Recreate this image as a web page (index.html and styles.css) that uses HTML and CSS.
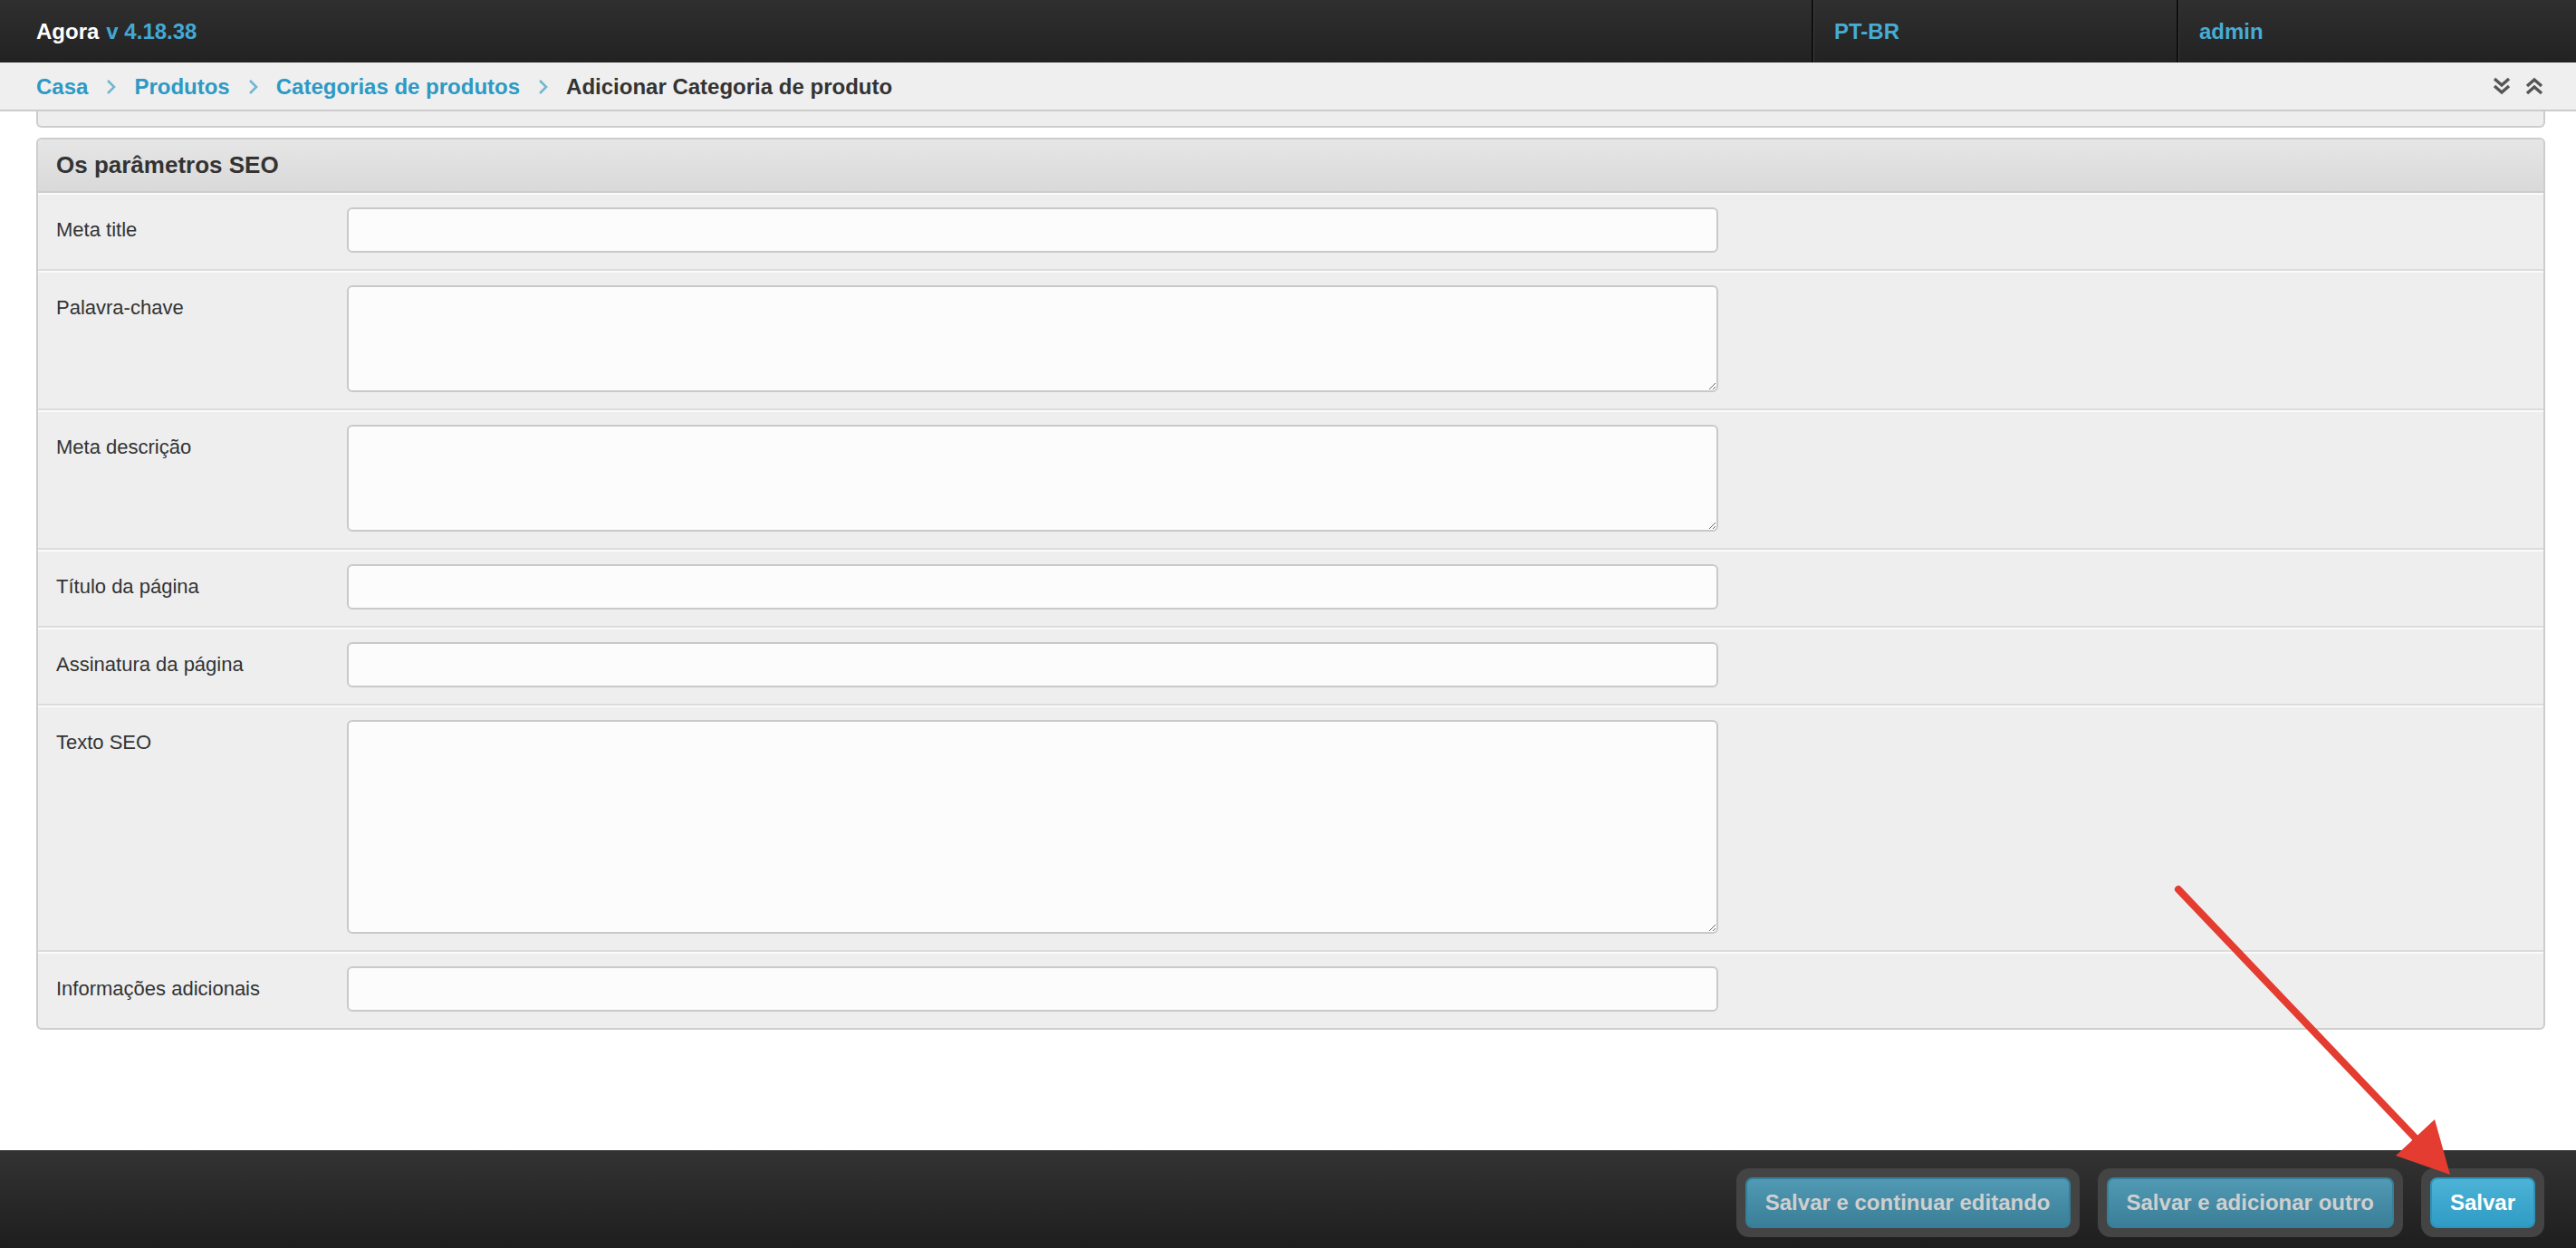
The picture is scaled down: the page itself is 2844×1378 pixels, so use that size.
FILE: index.html
```html
<!DOCTYPE html>
<html lang="pt-BR">
<head>
    <meta charset="utf-8">
    <title>Adicionar Categoria de produto | Agora</title>
    <link rel="stylesheet" href="styles.css">
</head>
<body>
    <div id="header">
        <div class="branding">Agora <span class="version">v 4.18.38</span></div>
        <div class="user-tools">
            <div class="tool-cell lang">PT-BR</div>
            <div class="tool-cell user">admin</div>
        </div>
    </div>

    <div class="breadcrumbs">
        <div class="crumbs">
            <a href="#">Casa</a>
            <svg class="sep" viewBox="0 0 11 18"><path d="M2 2 L9 9 L2 16" /></svg>
            <a href="#">Produtos</a>
            <svg class="sep" viewBox="0 0 11 18"><path d="M2 2 L9 9 L2 16" /></svg>
            <a href="#">Categorias de produtos</a>
            <svg class="sep" viewBox="0 0 11 18"><path d="M2 2 L9 9 L2 16" /></svg>
            <span class="current">Adicionar Categoria de produto</span>
        </div>
        <div class="toggles">
            <svg class="toggle" viewBox="0 0 22 22"><path d="M3 3 L11 10 L19 3 M3 11 L11 18 L19 11" /></svg>
            <svg class="toggle" viewBox="0 0 22 22"><path d="M3 11 L11 4 L19 11 M3 19 L11 12 L19 19" /></svg>
        </div>
    </div>

    <div id="content">
        <div class="module collapsed"></div>

        <fieldset class="module">
            <h2>Os parâmetros SEO</h2>
            <div class="form-row">
                <label>Meta title</label>
                <input type="text">
            </div>
            <div class="form-row">
                <label>Palavra-chave</label>
                <textarea></textarea>
            </div>
            <div class="form-row">
                <label>Meta descrição</label>
                <textarea></textarea>
            </div>
            <div class="form-row">
                <label>Título da página</label>
                <input type="text">
            </div>
            <div class="form-row">
                <label>Assinatura da página</label>
                <input type="text">
            </div>
            <div class="form-row">
                <label>Texto SEO</label>
                <textarea class="tall"></textarea>
            </div>
            <div class="form-row">
                <label>Informações adicionais</label>
                <input type="text">
            </div>
        </fieldset>
    </div>

    <div class="submit-row">
        <div class="btn-wrap"><button class="btn">Salvar e continuar editando</button></div>
        <div class="btn-wrap"><button class="btn">Salvar e adicionar outro</button></div>
        <div class="btn-wrap"><button class="btn default">Salvar</button></div>
    </div>

    <svg class="annotation" viewBox="0 0 2844 1378">
        <line x1="2405" y1="982" x2="2668" y2="1258" />
        <polygon points="2705,1297 2645,1276 2688,1236" />
    </svg>
</body>
</html>
```

FILE: styles.css
```css
html,
body {
    margin: 0;
    height: 100%;
}

body {
    display: flex;
    flex-direction: column;
    font-family: "Liberation Sans", Arial, sans-serif;
    color: #333;
    background: #fff;
    overflow: hidden;
}

/* top bar */

#header {
    display: flex;
    align-items: stretch;
    justify-content: space-between;
    height: 69px;
    flex-shrink: 0;
    background: linear-gradient(#2f2f2f, #222);
}

.branding {
    display: flex;
    align-items: center;
    padding-left: 40px;
    font-size: 24px;
    font-weight: bold;
    color: #fff;
}

.version {
    margin-left: 8px;
    color: #43a9d3;
}

.user-tools {
    display: flex;
}

.tool-cell {
    display: flex;
    align-items: center;
    padding-left: 23px;
    border-left: 2px solid #0e0e0e;
    box-shadow: inset 1px 0 0 #3a3a3a;
    font-size: 24px;
    font-weight: bold;
    color: #47acd5;
}

.tool-cell.lang {
    width: 378px;
}

.tool-cell.user {
    width: 416px;
}

/* breadcrumbs */

.breadcrumbs {
    display: flex;
    align-items: center;
    justify-content: space-between;
    height: 52px;
    flex-shrink: 0;
    padding: 0 35px 0 40px;
    background: #efefef;
    border-bottom: 2px solid #cbcbcb;
}

.crumbs {
    display: flex;
    align-items: center;
    padding-top: 2px;
    font-size: 24px;
    font-weight: bold;
}

.crumbs a {
    color: #2d99c4;
    text-decoration: none;
}

.crumbs .current {
    color: #333;
}

.sep {
    width: 11px;
    height: 18px;
    margin: 0 20px;
    fill: none;
    stroke: #73b6d2;
    stroke-width: 2.6;
}

.toggles {
    display: flex;
    gap: 14px;
}

.toggle {
    width: 22px;
    height: 22px;
    fill: none;
    stroke: #555;
    stroke-width: 3.4;
}

/* content */

#content {
    flex: 1;
    padding: 0 34px 0 40px;
}

.module {
    margin: 0;
    padding: 0;
    min-width: 0;
    background: #eee;
    border: 2px solid #cdcdcd;
    border-radius: 6px;
}

.module.collapsed {
    height: 16px;
    border-top: 0;
    border-radius: 0 0 6px 6px;
    margin-bottom: 11px;
}

.module h2 {
    margin: 0;
    height: 57px;
    line-height: 57px;
    padding: 0 20px;
    font-size: 26px;
    font-weight: bold;
    color: #333;
    background: linear-gradient(#e6e6e6, #d9d9d9);
    border-bottom: 2px solid #cdcdcd;
    border-radius: 4px 4px 0 0;
}

.form-row {
    display: flex;
    align-items: flex-start;
    padding: 14px 20px 18px;
    border-top: 2px solid #fafafa;
    border-bottom: 2px solid #dcdcdc;
}

.form-row:last-child {
    border-bottom: 0;
}

.form-row label {
    width: 321px;
    flex-shrink: 0;
    line-height: 50px;
    font-size: 22px;
    color: #333;
}

.form-row input,
.form-row textarea {
    box-sizing: border-box;
    width: 1514px;
    margin: 0;
    background: #fcfcfc;
    border: 2px solid #c9c9c9;
    border-radius: 6px;
    font-family: "Liberation Sans", Arial, sans-serif;
    font-size: 22px;
}

.form-row input {
    height: 50px;
}

.form-row textarea {
    height: 118px;
    display: block;
}

.form-row textarea.tall {
    height: 236px;
}

/* footer */

.submit-row {
    display: flex;
    justify-content: flex-end;
    align-items: flex-start;
    gap: 20px;
    height: 88px;
    flex-shrink: 0;
    padding: 20px 35px 0 0;
    background: linear-gradient(#333, #1e1e1e);
}

.btn-wrap {
    padding: 10px;
    background: #444;
    border-radius: 14px;
}

.btn {
    display: block;
    height: 56px;
    padding: 0 20px;
    border: 2px solid #34809b;
    border-radius: 8px;
    background: linear-gradient(#5199b4, #3a7f97);
    font-family: "Liberation Sans", Arial, sans-serif;
    font-size: 24px;
    font-weight: bold;
    color: #cfcfcf;
}

.btn.default {
    border-color: #2e93ba;
    background: linear-gradient(#4db3d7, #2f9bc4);
    color: #fff;
}

/* red arrow drawn over the page */

.annotation {
    position: absolute;
    top: 0;
    left: 0;
    width: 2844px;
    height: 1378px;
    pointer-events: none;
}

.annotation line {
    stroke: #e43c30;
    stroke-width: 8;
    stroke-linecap: round;
}

.annotation polygon {
    fill: #e43c30;
}
```
